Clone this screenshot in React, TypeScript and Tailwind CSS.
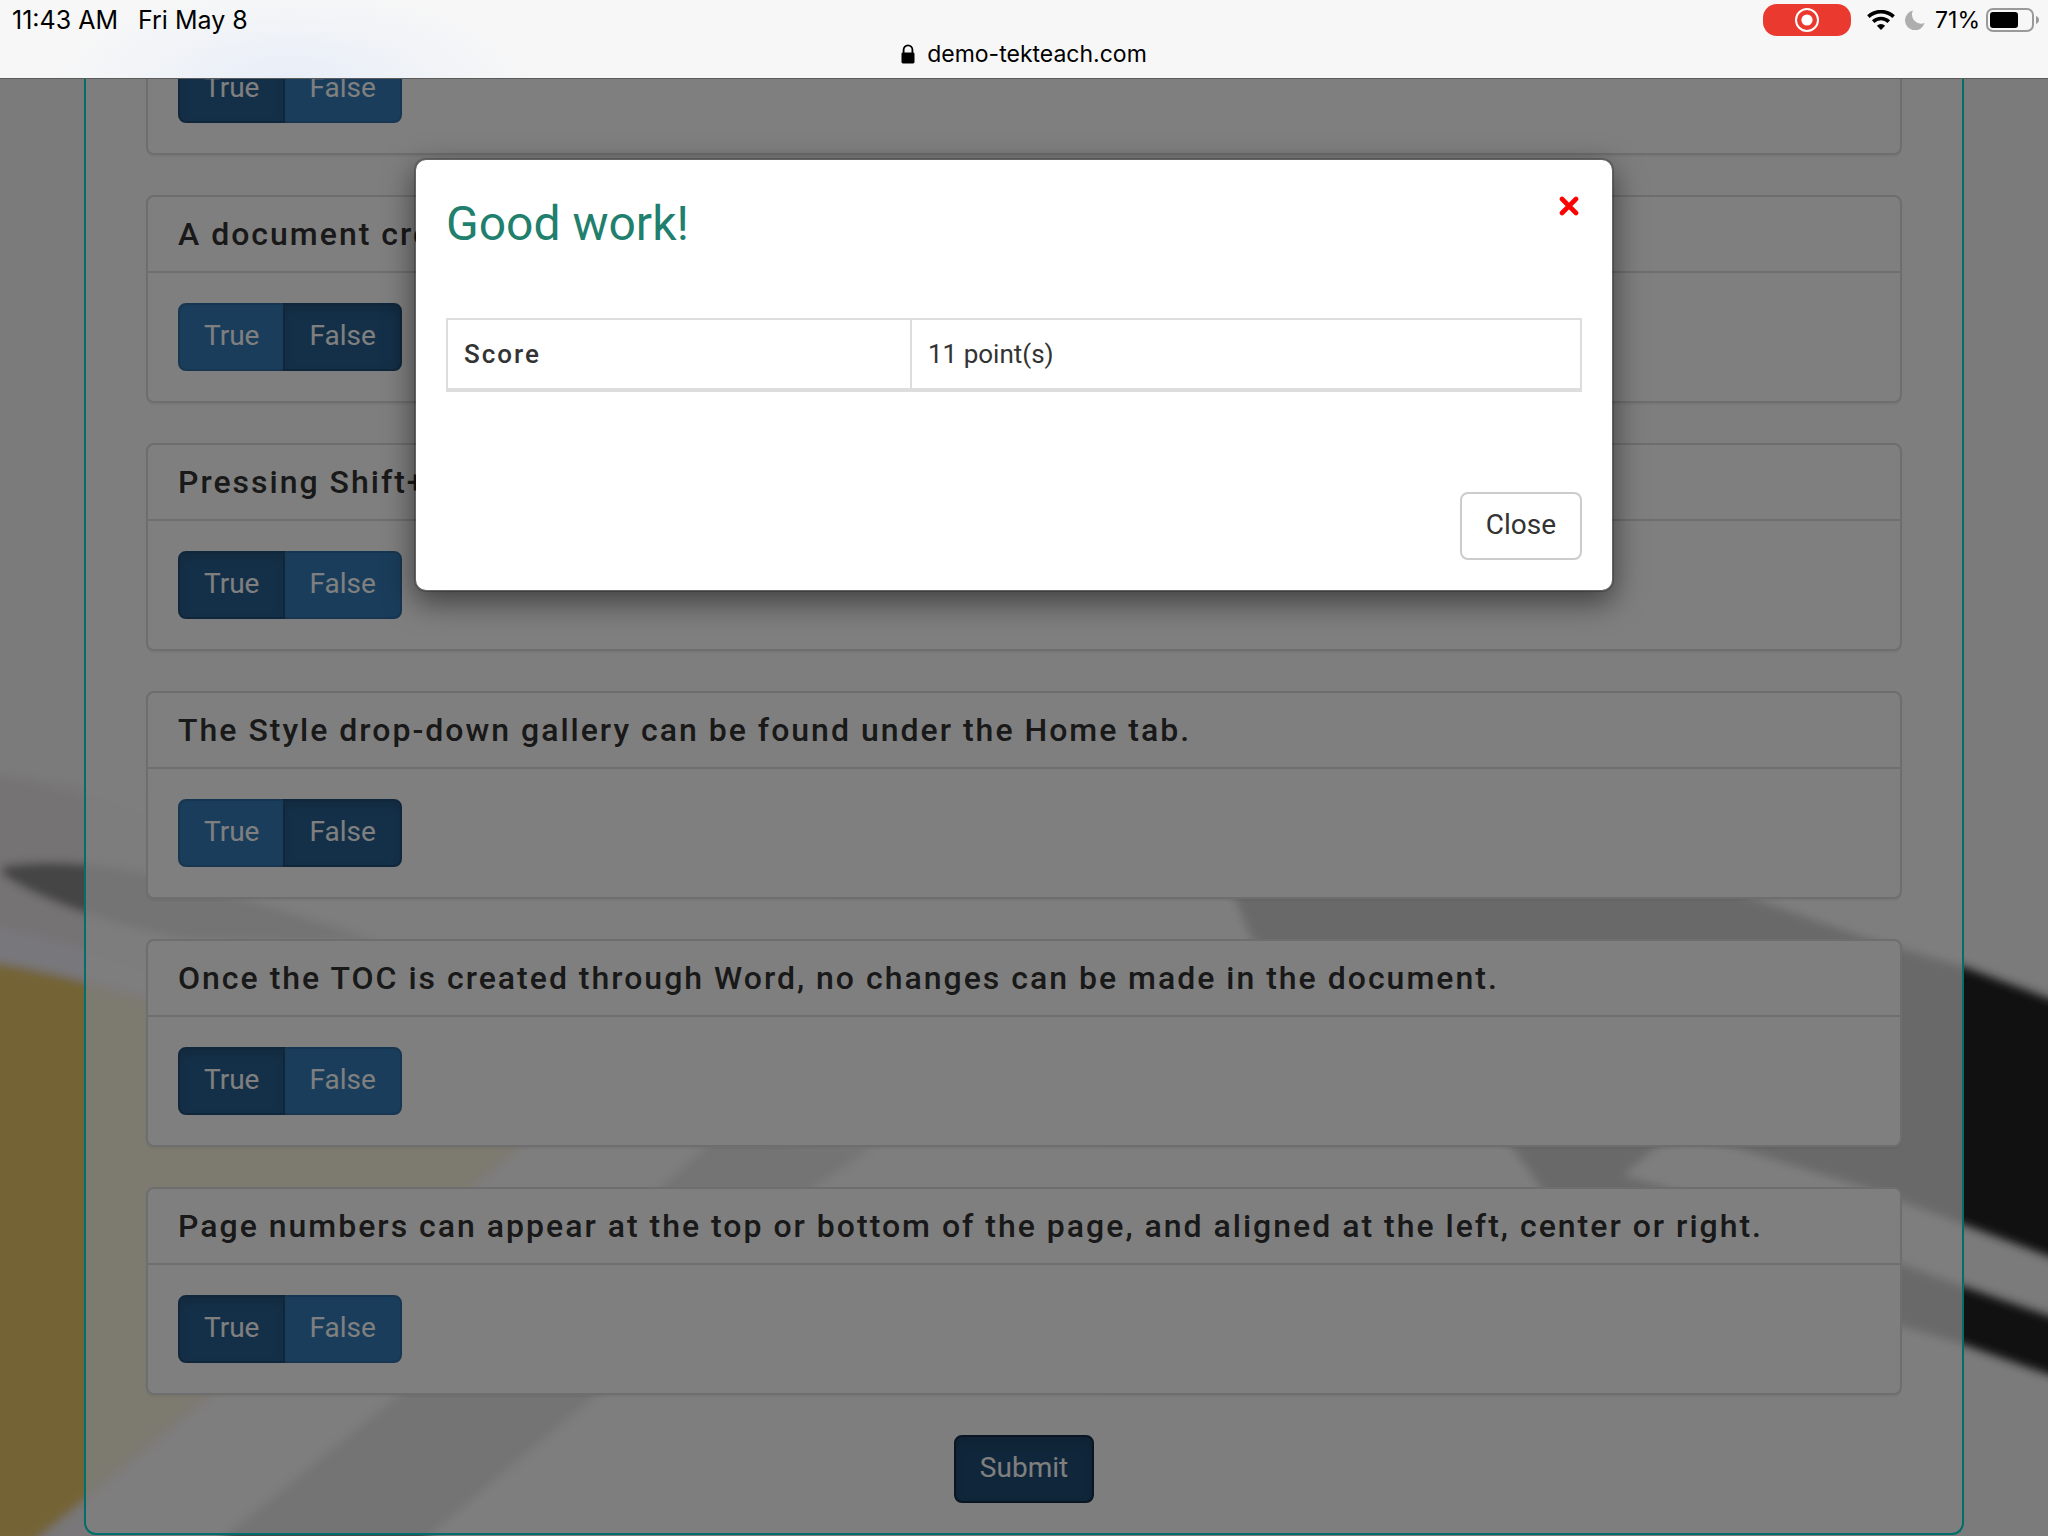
import { useState } from "react";
import { clsx } from "clsx";

interface Question {
  id: number;
  title?: string;
  answer: boolean;
}

const QUESTIONS: Question[] = [
  { id: 1, answer: true },
  { id: 2, title: "A document created", answer: false },
  { id: 3, title: "Pressing Shift+Enter", answer: true },
  { id: 4, title: "The Style drop-down gallery can be found under the Home tab.", answer: false },
  {
    id: 5,
    title: "Once the TOC is created through Word, no changes can be made in the document.",
    answer: true,
  },
  {
    id: 6,
    title: "Page numbers can appear at the top or bottom of the page, and aligned at the left, center or right.",
    answer: true,
  },
];

function LockIcon() {
  return (
    <svg viewBox="0 0 14 20" className="h-5 w-3.5" aria-hidden="true">
      <path d="M2.6 9V5.8a4.4 4.4 0 0 1 8.8 0V9" fill="none" stroke="#000" strokeWidth="1.8" />
      <rect x="0.5" y="8.5" width="13" height="11" rx="1.4" />
    </svg>
  );
}

function WifiIcon() {
  return (
    <svg viewBox="0 0 28 20" className="h-5 w-7" fill="none" stroke="#000" aria-hidden="true">
      <path d="M1.4 6.6a18.4 18.4 0 0 1 25.2 0" strokeWidth="3.6" />
      <path d="M6.2 11.6a11.4 11.4 0 0 1 15.6 0" strokeWidth="3.6" />
      <path d="M14 20l-4.1-4.3a6 6 0 0 1 8.2 0z" fill="#000" stroke="none" />
    </svg>
  );
}

function MoonIcon() {
  return (
    <svg viewBox="0 0 20 20" className="size-5" aria-hidden="true">
      <path d="M8 .5a10 10 0 1 0 11.6 12.6A9.2 9.2 0 0 1 8 .5z" fill="#aeaeae" />
    </svg>
  );
}

function BatteryIcon() {
  return (
    <svg viewBox="0 0 54 24" className="h-6 w-[54px]" aria-hidden="true">
      <rect x="1" y="1" width="46" height="22" rx="6" fill="none" stroke="#9a9a9a" strokeWidth="2" />
      <rect x="4" y="4" width="28" height="16" rx="3" />
      <path d="M50 8c2 .8 3 2.2 3 4s-1 3.2-3 4z" fill="#9a9a9a" />
    </svg>
  );
}

function BrowserBar() {
  return (
    <header className="relative z-10 h-[79px] shrink-0 border-b border-[#5a5a5a] bg-[#f7f7f7] bg-[radial-gradient(ellipse_240px_90px_at_290px_78px,#e8eef8,#f7f7f700)] font-[Inter,sans-serif] text-black">
      <div className="flex h-10 items-center justify-between pr-2 pl-3 text-[25px]/8">
        <div className="flex gap-5">
          <span>11:43 AM</span>
          <span>Fri May 8</span>
        </div>
        <div className="flex items-center">
          <span className="mr-4 flex h-8 w-[88px] items-center justify-center rounded-[14px] bg-[#ea3a30]">
            <svg viewBox="0 0 24 24" className="size-6" fill="#fff" aria-hidden="true">
              <circle cx="12" cy="12" r="11" fill="none" stroke="#fff" strokeWidth="2" />
              <circle cx="12" cy="12" r="5.6" />
            </svg>
          </span>
          <WifiIcon />
          <span className="mr-2.5 ml-2.5">
            <MoonIcon />
          </span>
          <span className="mr-1.5 text-[23px]">71%</span>
          <BatteryIcon />
        </div>
      </div>
      <div className="flex h-7 items-center justify-center gap-3 text-[23px]/8">
        <LockIcon />
        <span>demo-tekteach.com</span>
      </div>
    </header>
  );
}

function Backdrop() {
  return (
    <svg
      viewBox="0 78 2048 1458"
      preserveAspectRatio="none"
      className="absolute inset-0 size-full"
      aria-hidden="true"
    >
      <defs>
        <filter id="soft" x="-5%" y="-5%" width="110%" height="110%">
          <feGaussianBlur stdDeviation="5" />
        </filter>
      </defs>
      <g filter="url(#soft)">
        <path d="M-20 772C200 800 560 850 1100 950L1100 1400L-20 1560z" fill="#f2eff2" />
        <path d="M-20 772C40 780 110 800 170 830L200 980L-20 960z" fill="#ece6e9" />
        <path d="M-20 925C40 935 110 955 200 985V1010L-20 968z" fill="#f1eff8" />
        <path d="M-20 960C30 966 90 982 160 1000L330 1030L560 1110L522 1146L475 1187L215 1393L84 1501L30 1545H-20z" fill="#e8c86b" />
        <path d="M2 866C40 858 110 862 160 876C240 898 310 915 380 942L190 940C110 925 40 900 2 874z" fill="#8a8a8a" />
        <path d="M712 1140L875 1146L815 1187L600 1393L400 1560L195 1560L400 1393L660 1187z" fill="#8c8c8c" />
        <path
          d="M1235 899L1220 850L1600 850L1756 899L1867 938L1963 966L2070 1006V1264L1963 1224L1861 1186L1734 1147L1690 1137L1656 1147L1623 1175L1667 1188L1902 1264L1963 1286L2070 1323V1382L1963 1344L1902 1326L1560 1230L1540 1186L1512 1147L1252 939z"
          fill="#232323"
        />
      </g>
    </svg>
  );
}

function AnswerButtons({ initial }: { initial: boolean }) {
  const [value, setValue] = useState(initial);

  return (
    <div className="inline-flex text-[28px]/10 text-white">
      {[true, false].map((option) => (
        <button
          key={String(option)}
          type="button"
          aria-pressed={value === option}
          onClick={() => setValue(option)}
          className={clsx(
            "relative border-2 px-6 pt-[11px] pb-[13px]",
            option ? "rounded-l-lg" : "-ml-0.5 rounded-r-lg",
            value === option
              ? "z-10 border-[#204d74] bg-[#286090] shadow-[inset_0_6px_10px_rgba(0,0,0,0.125)]"
              : "border-[#2e6da4] bg-[#337ab7]",
          )}
        >
          {option ? "True" : "False"}
        </button>
      ))}
    </div>
  );
}

function QuestionPanel({ question }: { question: Question }) {
  return (
    <section className="mb-10 rounded-lg border-2 border-[#ddd] bg-white shadow-[0_2px_2px_rgba(0,0,0,0.05)]">
      {question.title && (
        <h2 className="border-b-2 border-[#ddd] px-7.5 py-[17px] text-[32px]/10 font-medium tracking-[2px] whitespace-nowrap">
          {question.title}
        </h2>
      )}
      <div className="flex p-7.5">
        <AnswerButtons initial={question.answer} />
      </div>
    </section>
  );
}

function ScoreDialog({ onClose }: { onClose: () => void }) {
  return (
    <div className="absolute inset-0 z-20 bg-black/50 pt-[79px] pr-5">
      <div
        role="dialog"
        aria-modal="true"
        aria-labelledby="score-title"
        className="mx-auto w-full max-w-[1200px] rounded-xl border-2 border-black/20 bg-white bg-clip-padding shadow-[0_10px_30px_rgba(0,0,0,0.5)]"
      >
        <div className="flex items-start justify-between px-7.5 pt-7.5">
          <h1 id="score-title" className="text-5xl/[68px] text-[#217f6e]">
            Good work!
          </h1>
          <button type="button" onClick={onClose} aria-label="Dismiss" className="px-[3px] py-1.5">
            <svg viewBox="0 0 20 20" className="size-5" aria-hidden="true">
              <path d="M3 3l14 14M17 3L3 17" stroke="#f00" strokeWidth="4.6" strokeLinecap="round" />
            </svg>
          </button>
        </div>
        <div className="px-7.5 pt-15">
          <table className="w-full table-fixed border-2 border-b-4 border-[#ddd] text-left text-[26px]/9">
            <tbody>
              <tr>
                <th scope="row" className="w-[464px] border-r-2 border-[#ddd] p-4 font-medium tracking-[2px]">
                  Score
                </th>
                <td className="p-4">11 point(s)</td>
              </tr>
            </tbody>
          </table>
        </div>
        <div className="flex justify-end px-7.5 pt-25 pb-7.5">
          <button
            type="button"
            onClick={onClose}
            className="rounded-lg border-2 border-[#ccc] bg-white px-6 pt-[11px] pb-[13px] text-[28px]/10"
          >
            Close
          </button>
        </div>
      </div>
    </div>
  );
}

export default function App() {
  const [open, setOpen] = useState(true);

  return (
    <div className="flex h-screen flex-col overflow-hidden font-[Roboto,sans-serif] text-[#333]">
      <BrowserBar />
      <main className="relative flex min-h-0 flex-1 flex-col justify-end overflow-hidden bg-[#f6f6f6] px-[84px] pb-px">
        <Backdrop />
        <form
          onSubmit={(e) => {
            e.preventDefault();
            setOpen(true);
          }}
          className="relative rounded-b-xl border-2 border-t-0 border-[#00dcd4] bg-white/80 px-15 pb-7.5"
        >
          {QUESTIONS.map((question) => (
            <QuestionPanel key={question.id} question={question} />
          ))}
          <div className="flex justify-center">
            <button
              type="submit"
              className="rounded-lg border-2 border-[#122b40] bg-[#204d74] px-6 pt-[11px] pb-[13px] text-[28px]/10 text-white shadow-[inset_0_6px_10px_rgba(0,0,0,0.125)]"
            >
              Submit
            </button>
          </div>
        </form>
        {open && <ScoreDialog onClose={() => setOpen(false)} />}
      </main>
    </div>
  );
}
